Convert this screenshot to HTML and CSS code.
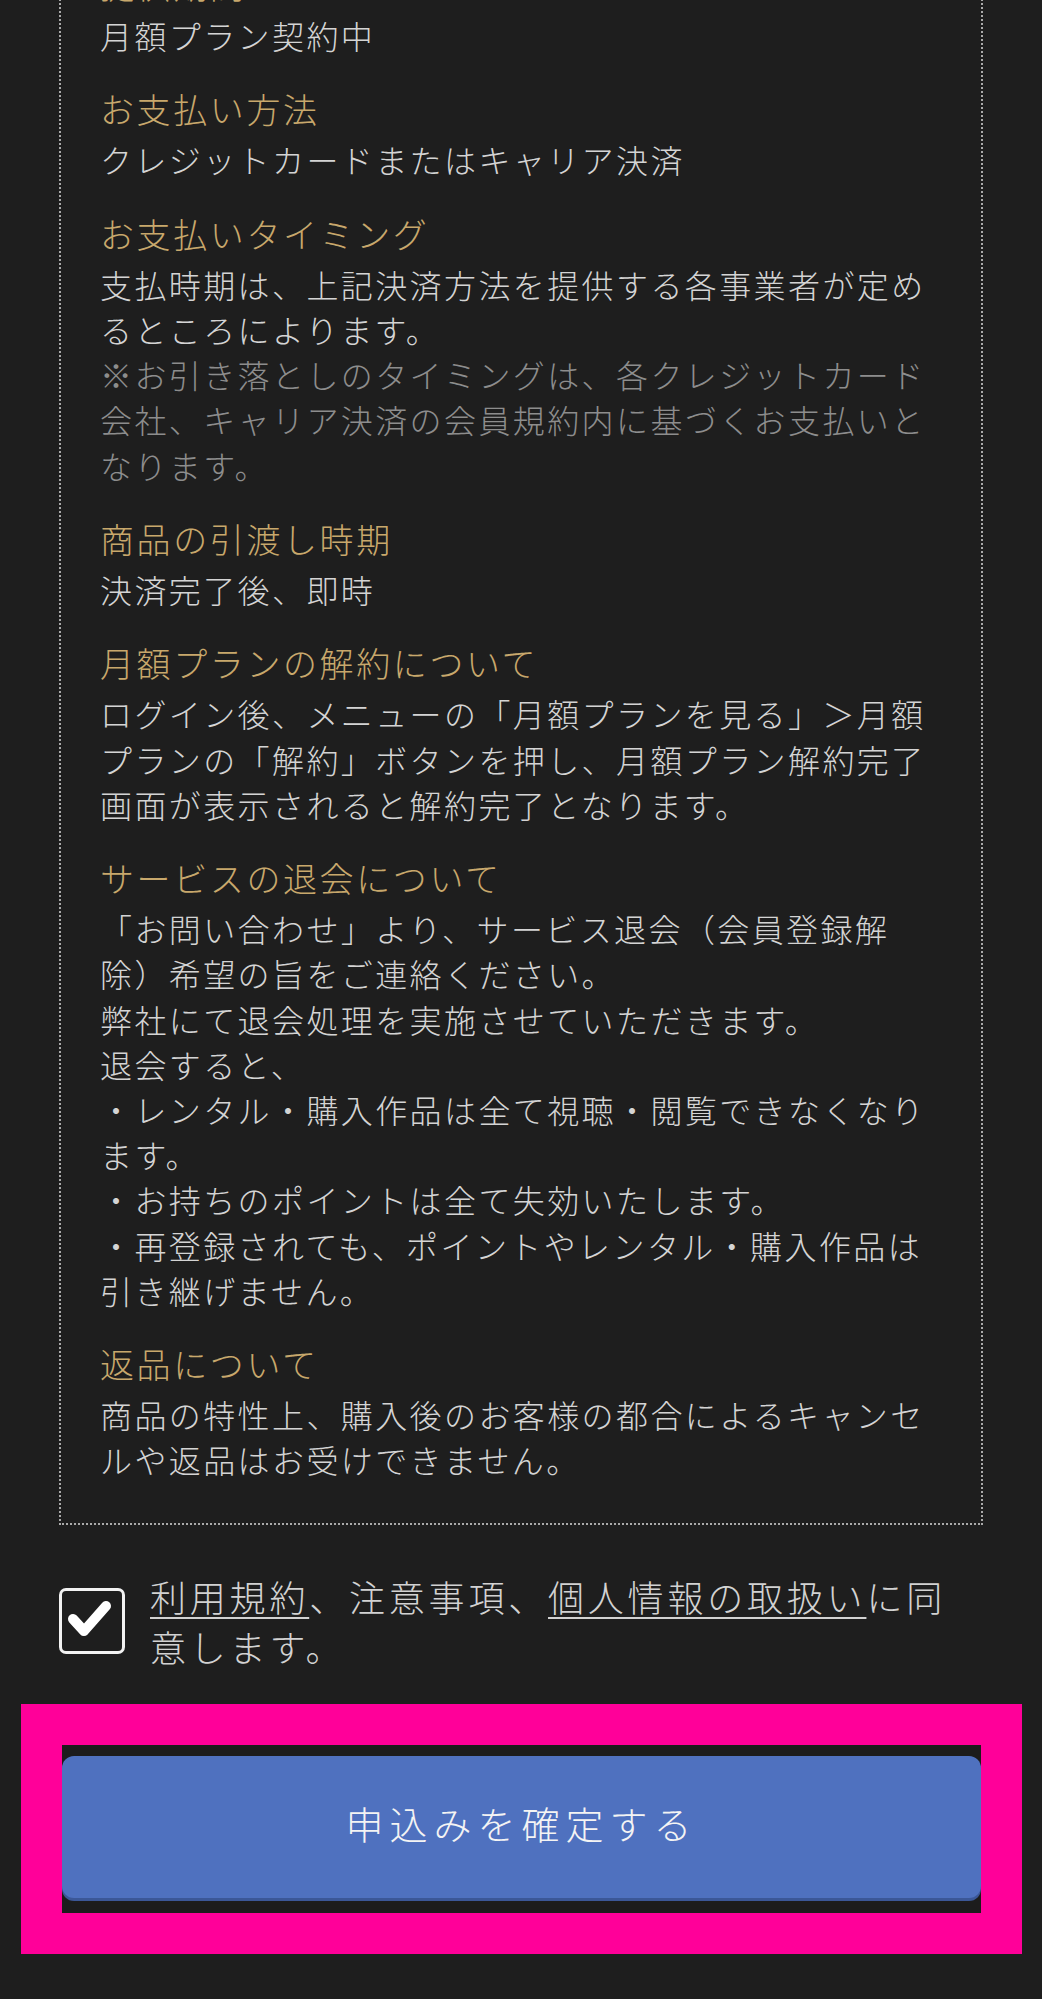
FILE: index.html
```html
<!DOCTYPE html>
<html lang="ja">
<head>
<meta charset="utf-8">
<title>申込み確認</title>
<link rel="stylesheet" href="styles.css">
</head>
<body>
<main class="page">
  <div class="content">
    <section class="terms">
      <div class="item">
        <h3 class="item-title">提供期間</h3>
        <p class="item-body">月額プラン契約中</p>
      </div>
      <div class="item">
        <h3 class="item-title">お支払い方法</h3>
        <p class="item-body">クレジットカードまたはキャリア決済</p>
      </div>
      <div class="item">
        <h3 class="item-title">お支払いタイミング</h3>
        <p class="item-body">支払時期は、上記決済方法を提供する各事業者が定めるところによります。</p>
        <p class="item-body note">※お引き落としのタイミングは、各クレジットカード会社、キャリア決済の会員規約内に基づくお支払いとなります。</p>
      </div>
      <div class="item">
        <h3 class="item-title">商品の引渡し時期</h3>
        <p class="item-body">決済完了後、即時</p>
      </div>
      <div class="item">
        <h3 class="item-title">月額プランの解約について</h3>
        <p class="item-body">ログイン後、メニューの「月額プランを見る」＞月額プランの「解約」ボタンを押し、月額プラン解約完了画面が表示されると解約完了となります。</p>
      </div>
      <div class="item">
        <h3 class="item-title">サービスの退会について</h3>
        <p class="item-body">「お問い合わせ」より、サービス退会（会員登録解除）希望の旨をご連絡ください。</p>
        <p class="item-body">弊社にて退会処理を実施させていただきます。</p>
        <p class="item-body">退会すると、</p>
        <p class="item-body">・レンタル・購入作品は全て視聴・閲覧できなくなります。</p>
        <p class="item-body">・お持ちのポイントは全て失効いたします。</p>
        <p class="item-body">・再登録されても、ポイントやレンタル・購入作品は引き継げません。</p>
      </div>
      <div class="item">
        <h3 class="item-title">返品について</h3>
        <p class="item-body">商品の特性上、購入後のお客様の都合によるキャンセルや返品はお受けできません。</p>
      </div>
    </section>

    <label class="agree">
      <span class="checkbox">
        <svg viewBox="0 0 60 60" width="60" height="60" aria-hidden="true">
          <path d="M11 28 L22 40 L44 15" fill="none" stroke="#ffffff" stroke-width="10" stroke-linecap="round" stroke-linejoin="round"/>
        </svg>
      </span>
      <span class="agree-text"><a class="link" href="#">利用規約</a>、注意事項、<a class="link" href="#">個人情報の取扱い</a>に同意します。</span>
    </label>
  </div>

  <div class="highlight">
    <div class="button-area">
      <button class="submit" type="button">申込みを確定する</button>
    </div>
  </div>
</main>
</body>
</html>
```

FILE: styles.css
```css
html, body {
  margin: 0;
  padding: 0;
  background: #1e1e1e;
}

body {
  font-family: "Noto Sans CJK JP", "Noto Sans", sans-serif;
  color: #d4d4d4;
  overflow: hidden;
}

.page {
  width: 1042px;
  height: 1999px;
  overflow: hidden;
}

.content {
  padding: 0 59px;
}

.terms {
  margin-top: -72px;
  border: 2px dotted #aaaaaa;
  padding: 30px 41px 40px 39px;
}

.item {
  margin-bottom: 26.2px;
}

.item:last-child {
  margin-bottom: 0;
}

.item-title {
  margin: 0 0 3px;
  font-size: 34px;
  line-height: 50px;
  font-weight: 300;
  letter-spacing: 2.6px;
  color: #c8a86c;
}

.item-body {
  margin: 0;
  font-size: 32px;
  line-height: 45.2px;
  font-weight: 300;
  letter-spacing: 2.4px;
  color: #d4d4d4;
}

.note {
  color: #8d8d8d;
}

.agree {
  display: flex;
  align-items: center;
  gap: 25px;
  margin-top: 46px;
}

.checkbox {
  flex: none;
  width: 60px;
  height: 60px;
  border: 3px solid #f2f2f2;
  border-radius: 7px;
  display: flex;
}

.agree-text {
  font-size: 36px;
  line-height: 50px;
  font-weight: 300;
  letter-spacing: 3.8px;
  color: #d2d2d2;
}

.link {
  color: inherit;
  text-decoration: underline;
  text-decoration-thickness: 2px;
  text-underline-offset: 5px;
}

.highlight {
  margin: 33px 20px 0 21px;
  border: 41px solid #ff0099;
}

.button-area {
  background: #1c1c1c;
  padding: 11px 0 12px;
}

.submit {
  display: block;
  width: 100%;
  height: 142px;
  border: 0;
  border-radius: 12px;
  background: #4f71bf;
  box-shadow: 0 3px 0 #3b5797;
  margin-bottom: 3px;
  color: #f4f4f4;
  font-family: "Noto Sans CJK JP", "Noto Sans", sans-serif;
  font-size: 38px;
  font-weight: 300;
  letter-spacing: 6px;
  padding: 0 0 8px 0;
}
```
